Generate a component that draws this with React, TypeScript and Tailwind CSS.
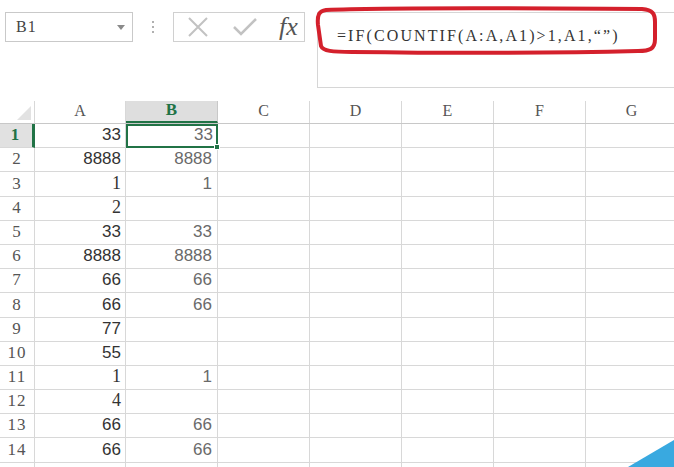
import React from 'react';

type Row = { n: number; a: string; b: string };

const rows: Row[] = [
  { n: 1, a: '33', b: '33' },
  { n: 2, a: '8888', b: '8888' },
  { n: 3, a: '1', b: '1' },
  { n: 4, a: '2', b: '' },
  { n: 5, a: '33', b: '33' },
  { n: 6, a: '8888', b: '8888' },
  { n: 7, a: '66', b: '66' },
  { n: 8, a: '66', b: '66' },
  { n: 9, a: '77', b: '' },
  { n: 10, a: '55', b: '' },
  { n: 11, a: '1', b: '1' },
  { n: 12, a: '4', b: '' },
  { n: 13, a: '66', b: '66' },
  { n: 14, a: '66', b: '66' },
];

const serifValues = new Set(['1', '2', '4']);

const columns = ['A', 'B', 'C', 'D', 'E', 'F', 'G'];
const gridCols = 'grid grid-cols-[35px_91px_92px_92px_92px_92px_92px_92px]';
const serif = "font-['Liberation_Serif',serif]";

function FormulaBar() {
  return (
    <div className="flex items-start h-[101px] pt-[12px] pl-[5px]">
      {/* Name box */}
      <div className="w-[128px] h-[30px] border border-[#c9c9c9] flex items-center justify-between pl-[10px] pr-[7px]">
        <span className={`text-[16px] leading-none tracking-[1px] text-[#444] ${serif}`}>B1</span>
        <svg width="8" height="5" viewBox="0 0 8 5">
          <path d="M0 0 L8 0 L4 5 Z" fill="#8a8a8a" />
        </svg>
      </div>

      {/* Drag handle */}
      <div className="w-[40px] h-[30px] flex flex-col items-center justify-center gap-[3px]">
        <span className="w-[2px] h-[2px] bg-[#b0b0b0]" />
        <span className="w-[2px] h-[2px] bg-[#b0b0b0]" />
        <span className="w-[2px] h-[2px] bg-[#b0b0b0]" />
      </div>

      {/* Cancel / enter / insert function */}
      <div className="w-[132px] h-[30px] border border-[#d0d0d0] flex items-center pl-[13px]">
        <svg width="22" height="22" viewBox="0 0 22 22">
          <path d="M2 2 L20 20 M20 2 L2 20" stroke="#c2c2c2" strokeWidth="2" fill="none" />
        </svg>
        <svg width="26" height="20" viewBox="0 0 26 20" className="ml-[23px]">
          <path d="M2 10 L9 17 L24 2" stroke="#c2c2c2" strokeWidth="2.5" fill="none" />
        </svg>
        <span className={`ml-[21px] text-[26px] leading-none italic text-[#555] ${serif}`}>fx</span>
      </div>

      {/* Formula input */}
      <div className="ml-[12px] flex-1 h-[76px] border border-r-0 border-[#d6d6d6] pl-[19px] pt-[10px]">
        <span className={`text-[16px] leading-none tracking-[2.1px] text-[#333] whitespace-nowrap ${serif}`}>
          =IF(COUNTIF(A:A,A1)&gt;1,A1,“”)
        </span>
      </div>
    </div>
  );
}

function Sheet() {
  return (
    <div className="font-['Liberation_Sans',sans-serif] leading-none">
      {/* Column headers */}
      <div className={`${gridCols} h-[23px] border-b border-[#c8c8c8]`}>
        <div className="relative border-r border-[#d8d8d8]">
          <svg width="14" height="14" viewBox="0 0 14 14" className="absolute right-[3px] bottom-[3px]">
            <path d="M14 0 L14 14 L0 14 Z" fill="#e2e2e2" />
          </svg>
        </div>
        {columns.map((c) => (
          <div
            key={c}
            className={
              c === 'B'
                ? `flex items-end justify-center pb-[3px] bg-[#dedede] border-r border-[#c8c8c8] border-b-2 border-b-[#217346] text-[#217346] font-bold text-[17px] ${serif}`
                : `flex items-end justify-center pb-[4px] border-r border-[#d8d8d8] text-[#555] text-[16px] ${serif}`
            }
          >
            {c}
          </div>
        ))}
      </div>

      {/* Data rows */}
      {rows.map((r) => (
        <div key={r.n} className={`${gridCols} h-[24.2px]`}>
          <div
            className={
              r.n === 1
                ? `flex items-end justify-center pb-[4px] pr-[2px] bg-[#e1e1e1] border-r-[3px] border-[#217346] border-b border-b-[#d8d8d8] text-[#217346] font-bold text-[17px] ${serif}`
                : `flex items-end justify-center pb-[4px] border-r border-b border-[#d8d8d8] text-[#555] text-[17px] tracking-[1px] ${serif}`
            }
          >
            {r.n}
          </div>
          <div
            className={`flex items-end justify-end pr-[4px] pb-[4px] border-r border-b border-[#d8d8d8] text-[#333] ${
              serifValues.has(r.a) ? `text-[18px] ${serif}` : 'text-[17px]'
            }`}
          >
            {r.a}
          </div>
          <div
            className={
              r.n === 1
                ? 'relative flex items-end justify-end pr-[3px] pb-[3px] border-2 border-[#217346] text-[17px] text-[#6a6a6a]'
                : 'flex items-end justify-end pr-[5px] pb-[4px] border-r border-b border-[#d8d8d8] text-[17px] text-[#6a6a6a]'
            }
          >
            {r.b}
            {r.n === 1 && (
              <span className="absolute -right-[4px] -bottom-[4px] w-[6px] h-[6px] bg-[#217346] border border-white" />
            )}
          </div>
          {columns.slice(2).map((c) => (
            <div key={c} className="border-r border-b border-[#d8d8d8]" />
          ))}
        </div>
      ))}

      <div className={`${gridCols} h-[24px]`}>
        {Array.from({ length: 8 }).map((_, i) => (
          <div key={i} className="border-r border-[#d8d8d8]" />
        ))}
      </div>
    </div>
  );
}

export default function App() {
  return (
    <div className="relative w-[674px] h-[467px] overflow-hidden bg-white">
      <FormulaBar />
      <Sheet />

      {/* Hand-drawn highlight around the formula */}
      <svg
        className="absolute left-[312px] top-[5px] pointer-events-none"
        width="348"
        height="52"
        viewBox="0 0 348 52"
      >
        <path
          d="M14 5 C60 3 200 3 330 4 C341 5 343 9 343 17 L343 34 C343 44 338 46 326 46 C250 48 120 48 40 47 C20 47 11 46 9 41 L6 20 C5 10 7 6 14 5 Z"
          fill="none"
          stroke="#d4202c"
          strokeWidth="4"
          strokeLinejoin="round"
        />
      </svg>

      {/* Corner ribbon */}
      <svg className="absolute right-0 bottom-0" width="46" height="27" viewBox="0 0 46 27">
        <path d="M0 27 L46 0 L46 27 Z" fill="#39a9e0" />
      </svg>
    </div>
  );
}
